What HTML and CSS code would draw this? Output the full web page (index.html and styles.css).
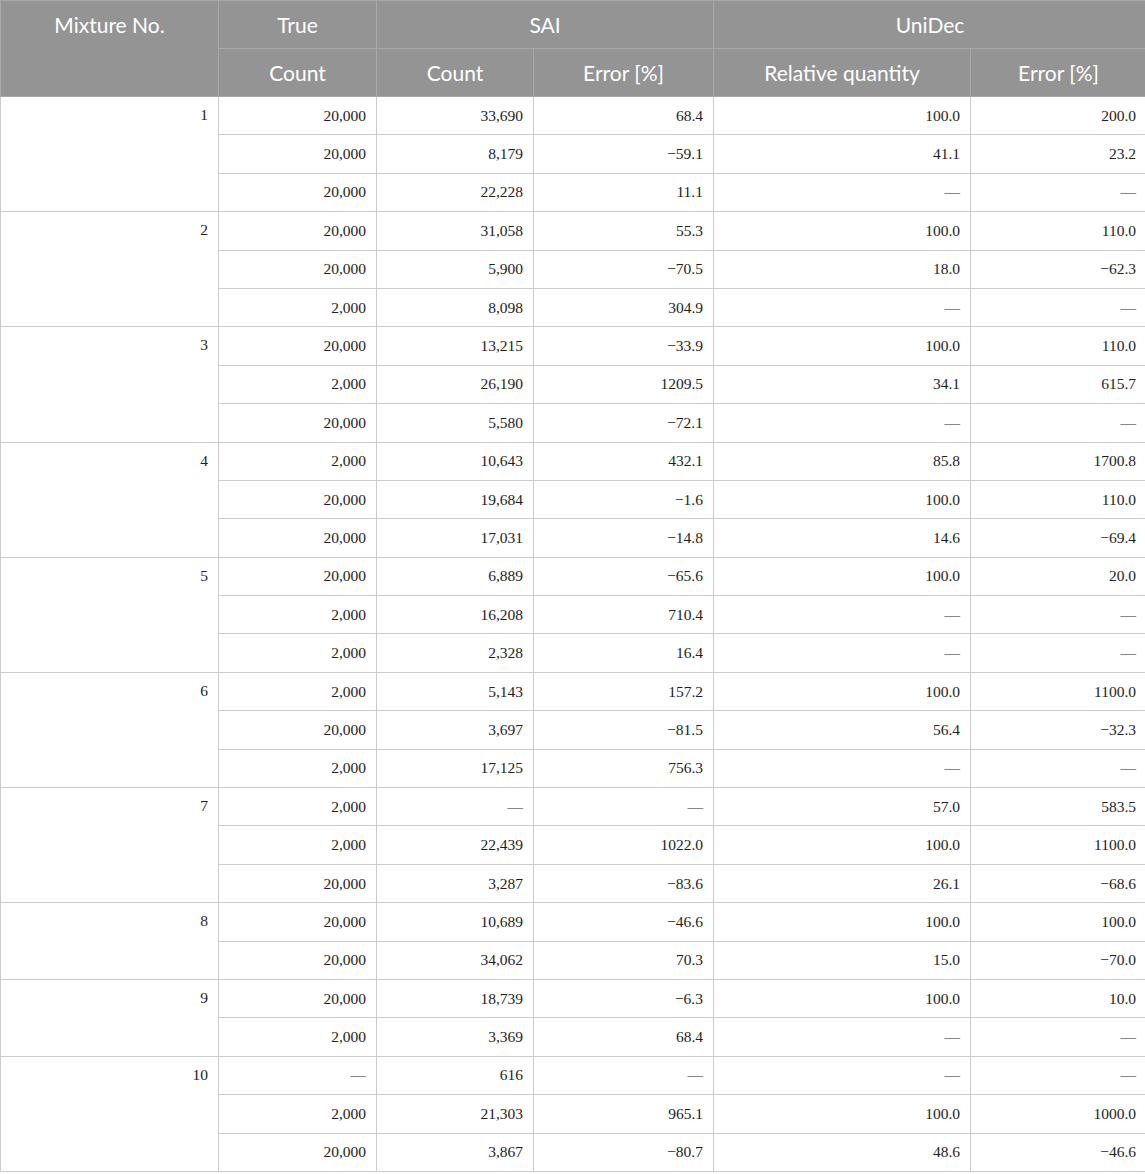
FILE: index.html
```html
<!DOCTYPE html>
<html>
<head>
<meta charset="utf-8">
<link rel="stylesheet" href="styles.css">
</head>
<body>
<table class="data">
<colgroup>
<col class="c1"><col class="c2"><col class="c3"><col class="c4"><col class="c5"><col class="c6">
</colgroup>
<thead>
<tr class="h1">
<th rowspan="2" class="top">Mixture No.</th>
<th>True</th>
<th colspan="2">SAI</th>
<th colspan="2">UniDec</th>
</tr>
<tr class="h2">
<th>Count</th>
<th>Count</th>
<th>Error [%]</th>
<th>Relative quantity</th>
<th>Error [%]</th>
</tr>
</thead>
<tbody>
<tr><td rowspan="3" class="num">1</td><td>20,000</td><td>33,690</td><td>68.4</td><td>100.0</td><td>200.0</td></tr>
<tr><td>20,000</td><td>8,179</td><td>−59.1</td><td>41.1</td><td>23.2</td></tr>
<tr><td>20,000</td><td>22,228</td><td>11.1</td><td>—</td><td>—</td></tr>
<tr><td rowspan="3" class="num">2</td><td>20,000</td><td>31,058</td><td>55.3</td><td>100.0</td><td>110.0</td></tr>
<tr><td>20,000</td><td>5,900</td><td>−70.5</td><td>18.0</td><td>−62.3</td></tr>
<tr><td>2,000</td><td>8,098</td><td>304.9</td><td>—</td><td>—</td></tr>
<tr><td rowspan="3" class="num">3</td><td>20,000</td><td>13,215</td><td>−33.9</td><td>100.0</td><td>110.0</td></tr>
<tr><td>2,000</td><td>26,190</td><td>1209.5</td><td>34.1</td><td>615.7</td></tr>
<tr><td>20,000</td><td>5,580</td><td>−72.1</td><td>—</td><td>—</td></tr>
<tr><td rowspan="3" class="num">4</td><td>2,000</td><td>10,643</td><td>432.1</td><td>85.8</td><td>1700.8</td></tr>
<tr><td>20,000</td><td>19,684</td><td>−1.6</td><td>100.0</td><td>110.0</td></tr>
<tr><td>20,000</td><td>17,031</td><td>−14.8</td><td>14.6</td><td>−69.4</td></tr>
<tr><td rowspan="3" class="num">5</td><td>20,000</td><td>6,889</td><td>−65.6</td><td>100.0</td><td>20.0</td></tr>
<tr><td>2,000</td><td>16,208</td><td>710.4</td><td>—</td><td>—</td></tr>
<tr><td>2,000</td><td>2,328</td><td>16.4</td><td>—</td><td>—</td></tr>
<tr><td rowspan="3" class="num">6</td><td>2,000</td><td>5,143</td><td>157.2</td><td>100.0</td><td>1100.0</td></tr>
<tr><td>20,000</td><td>3,697</td><td>−81.5</td><td>56.4</td><td>−32.3</td></tr>
<tr><td>2,000</td><td>17,125</td><td>756.3</td><td>—</td><td>—</td></tr>
<tr><td rowspan="3" class="num">7</td><td>2,000</td><td>—</td><td>—</td><td>57.0</td><td>583.5</td></tr>
<tr><td>2,000</td><td>22,439</td><td>1022.0</td><td>100.0</td><td>1100.0</td></tr>
<tr><td>20,000</td><td>3,287</td><td>−83.6</td><td>26.1</td><td>−68.6</td></tr>
<tr><td rowspan="2" class="num">8</td><td>20,000</td><td>10,689</td><td>−46.6</td><td>100.0</td><td>100.0</td></tr>
<tr><td>20,000</td><td>34,062</td><td>70.3</td><td>15.0</td><td>−70.0</td></tr>
<tr><td rowspan="2" class="num">9</td><td>20,000</td><td>18,739</td><td>−6.3</td><td>100.0</td><td>10.0</td></tr>
<tr><td>2,000</td><td>3,369</td><td>68.4</td><td>—</td><td>—</td></tr>
<tr><td rowspan="3" class="num">10</td><td>—</td><td>616</td><td>—</td><td>—</td><td>—</td></tr>
<tr><td>2,000</td><td>21,303</td><td>965.1</td><td>100.0</td><td>1000.0</td></tr>
<tr><td>20,000</td><td>3,867</td><td>−80.7</td><td>48.6</td><td>−46.6</td></tr>
</tbody>
</table>
</body>
</html>
```
FILE: styles.css
```css
html, body {
  margin: 0;
  padding: 0;
  background: #ffffff;
}

.data {
  border-collapse: collapse;
  table-layout: fixed;
  width: 1146px;
}

.c1 { width: 218px; }
.c2 { width: 158px; }
.c3 { width: 157px; }
.c4 { width: 180px; }
.c5 { width: 257px; }
.c6 { width: 176px; }

.data th {
  background: #949494;
  color: #ffffff;
  font-family: Lato, "Open Sans", sans-serif;
  font-weight: 400;
  font-size: 21px;
  text-align: center;
  border: 1px solid #a8a8a8;
  padding: 0 10px;
  vertical-align: middle;
}

.data th.top {
  vertical-align: top;
  padding-top: 11px;
}

.data .h1 { height: 48px; }
.data .h2 { height: 48px; }

.data td {
  font-family: "Liberation Serif", "Times New Roman", serif;
  font-size: 15.5px;
  color: #1e1e1e;
  text-align: right;
  padding: 0 10px;
  height: 37.4px;
  border: 1px solid #cccccc;
  vertical-align: middle;
}

.data td.num {
  vertical-align: top;
  padding-top: 9px;
}
```
